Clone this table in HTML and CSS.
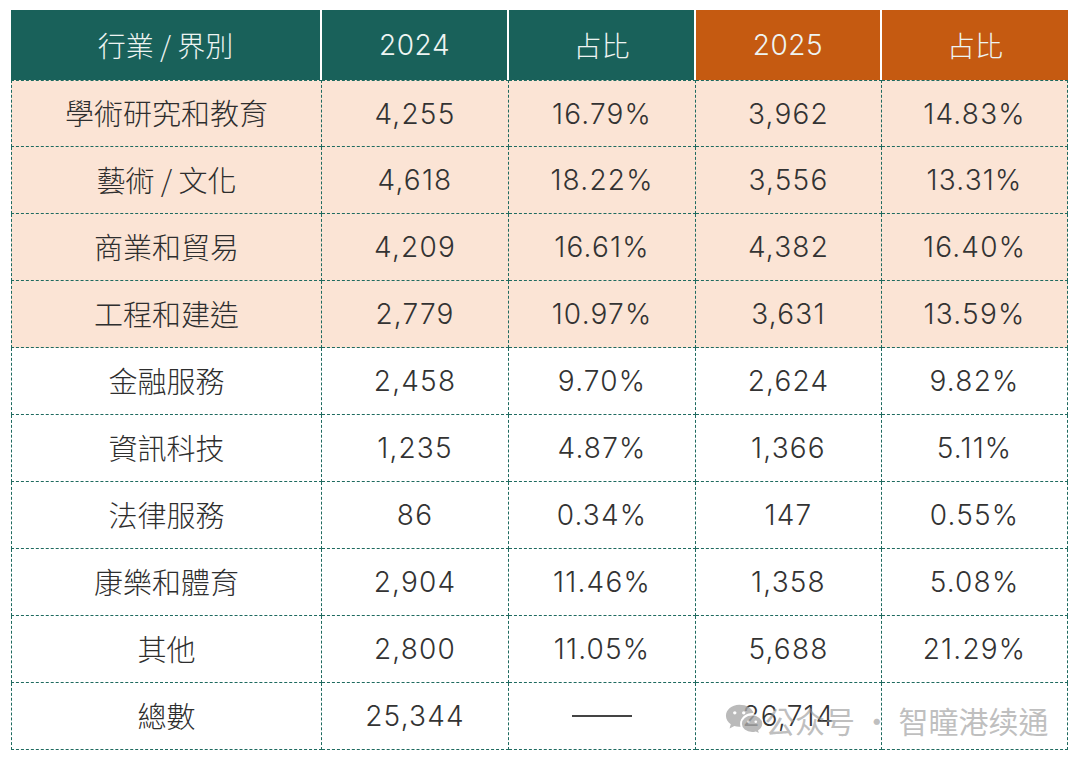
FILE: index.html
```html
<!DOCTYPE html>
<html lang="zh-Hant">
<head>
<meta charset="utf-8">
<title>行業 / 界別</title>
<link rel="stylesheet" href="styles.css">
</head>
<body>
<div class="wrap">
  <div class="table">
    <div class="hd teal cjk">行業 / 界別</div>
    <div class="hd teal">2024</div>
    <div class="hd teal cjk">占比</div>
    <div class="hd orange">2025</div>
    <div class="hd orange last cjk">占比</div>

    <div class="c first top peach">學術研究和教育</div><div class="c top peach">4,255</div><div class="c top peach">16.79%</div><div class="c top peach">3,962</div><div class="c top peach">14.83%</div>
    <div class="c first peach">藝術 / 文化</div><div class="c peach">4,618</div><div class="c peach">18.22%</div><div class="c peach">3,556</div><div class="c peach">13.31%</div>
    <div class="c first peach">商業和貿易</div><div class="c peach">4,209</div><div class="c peach">16.61%</div><div class="c peach">4,382</div><div class="c peach">16.40%</div>
    <div class="c first peach">工程和建造</div><div class="c peach">2,779</div><div class="c peach">10.97%</div><div class="c peach">3,631</div><div class="c peach">13.59%</div>
    <div class="c first">金融服務</div><div class="c">2,458</div><div class="c">9.70%</div><div class="c">2,624</div><div class="c">9.82%</div>
    <div class="c first">資訊科技</div><div class="c">1,235</div><div class="c">4.87%</div><div class="c">1,366</div><div class="c">5.11%</div>
    <div class="c first">法律服務</div><div class="c">86</div><div class="c">0.34%</div><div class="c">147</div><div class="c">0.55%</div>
    <div class="c first">康樂和體育</div><div class="c">2,904</div><div class="c">11.46%</div><div class="c">1,358</div><div class="c">5.08%</div>
    <div class="c first">其他</div><div class="c">2,800</div><div class="c">11.05%</div><div class="c">5,688</div><div class="c">21.29%</div>
    <div class="c first">總數</div><div class="c">25,344</div><div class="c"><span class="dash"></span></div><div class="c">26,714</div><div class="c"></div>
  </div>
  <div class="watermark">
    <svg class="wx" width="38" height="36" viewBox="0 0 40 36">
      <path d="M15 2C7 2 1 7.3 1 13.6c0 3.6 2 6.8 5.1 8.9L4.8 27l5-2.6c1.6.5 3.3.7 5.2.7 .5 0 1 0 1.5-.1-.3-1-.5-2-.5-3.1 0-6.2 5.8-11.2 13-11.2h1C28.6 5.6 22.4 2 15 2z" fill="#a9a9a9"/>
      <circle cx="10.3" cy="10.5" r="1.8" fill="#fff"/>
      <circle cx="19.7" cy="10.5" r="1.8" fill="#fff"/>
      <path d="M28.5 12.5c-6.5 0-11.5 4.3-11.5 9.5s5 9.5 11.5 9.5c1.4 0 2.8-.2 4-.6l4.3 2.2-1.1-3.8c2.6-1.8 4.3-4.4 4.3-7.3 0-5.2-5-9.5-11.5-9.5z" fill="#a9a9a9" stroke="#fff" stroke-width="1.6"/>
      <circle cx="24.6" cy="19.8" r="1.4" fill="#fff"/>
      <circle cx="32.4" cy="19.8" r="1.4" fill="#fff"/>
    </svg>
    <span class="wtext">公众号 · 智瞳港续通</span>
  </div>
</div>
</body>
</html>
```
FILE: styles.css
```css
html, body {
  margin: 0;
  padding: 0;
  background: #ffffff;
}
body {
  font-family: "Inter", "Noto Sans CJK TC", sans-serif;
}
.wrap {
  position: relative;
  padding: 10px 11px;
  width: 1080px;
  height: 762px;
  box-sizing: border-box;
}
.table {
  display: grid;
  grid-template-columns: 311px 187px 187px 186px 186px;
  grid-template-rows: 70px repeat(10, 67px);
  width: 1057px;
}
.hd {
  display: flex;
  align-items: center;
  justify-content: center;
  color: #eef4f2;
  font-size: 28px;
  font-family: "Inter", "Noto Sans CJK TC", sans-serif;
  font-weight: 300;
  letter-spacing: 0.6px;
  border-right: 2px solid #ffffff;
  box-sizing: border-box;
}
.hd.cjk {
  font-family: "Noto Sans CJK TC", sans-serif;
  font-weight: 300;
  font-size: 28px;
  letter-spacing: 0;
}
.hd.last { border-right: none; }
.teal { background: #19615a; }
.orange { background: #c55a11; }
.c {
  display: flex;
  align-items: center;
  justify-content: center;
  color: #333333;
  font-size: 28px;
  font-weight: 300;
  letter-spacing: 1.2px;
  border-right: 1px dashed #1e6a5f;
  border-bottom: 1px dashed #1e6a5f;
  box-sizing: border-box;
}
.c.first {
  border-left: 1px dashed #1e6a5f;
  font-family: "Noto Sans CJK TC", sans-serif;
  font-weight: 300;
  font-size: 29px;
  letter-spacing: 0;
  color: #2e2e2e;
  padding-bottom: 3px;
}
.c.top { border-top: 1px dashed #1e6a5f; }
.peach { background: #fbe4d5; }
.dash {
  display: block;
  width: 60px;
  height: 1.5px;
  background: #444444;
}
.watermark {
  position: absolute;
  left: 725px;
  top: 698px;
  display: flex;
  align-items: center;
  gap: 2px;
  opacity: 0.8;
}
.wtext {
  font-family: "Noto Sans CJK SC", sans-serif;
  font-size: 30px;
  color: rgba(150, 150, 150, 0.75);
}
```
